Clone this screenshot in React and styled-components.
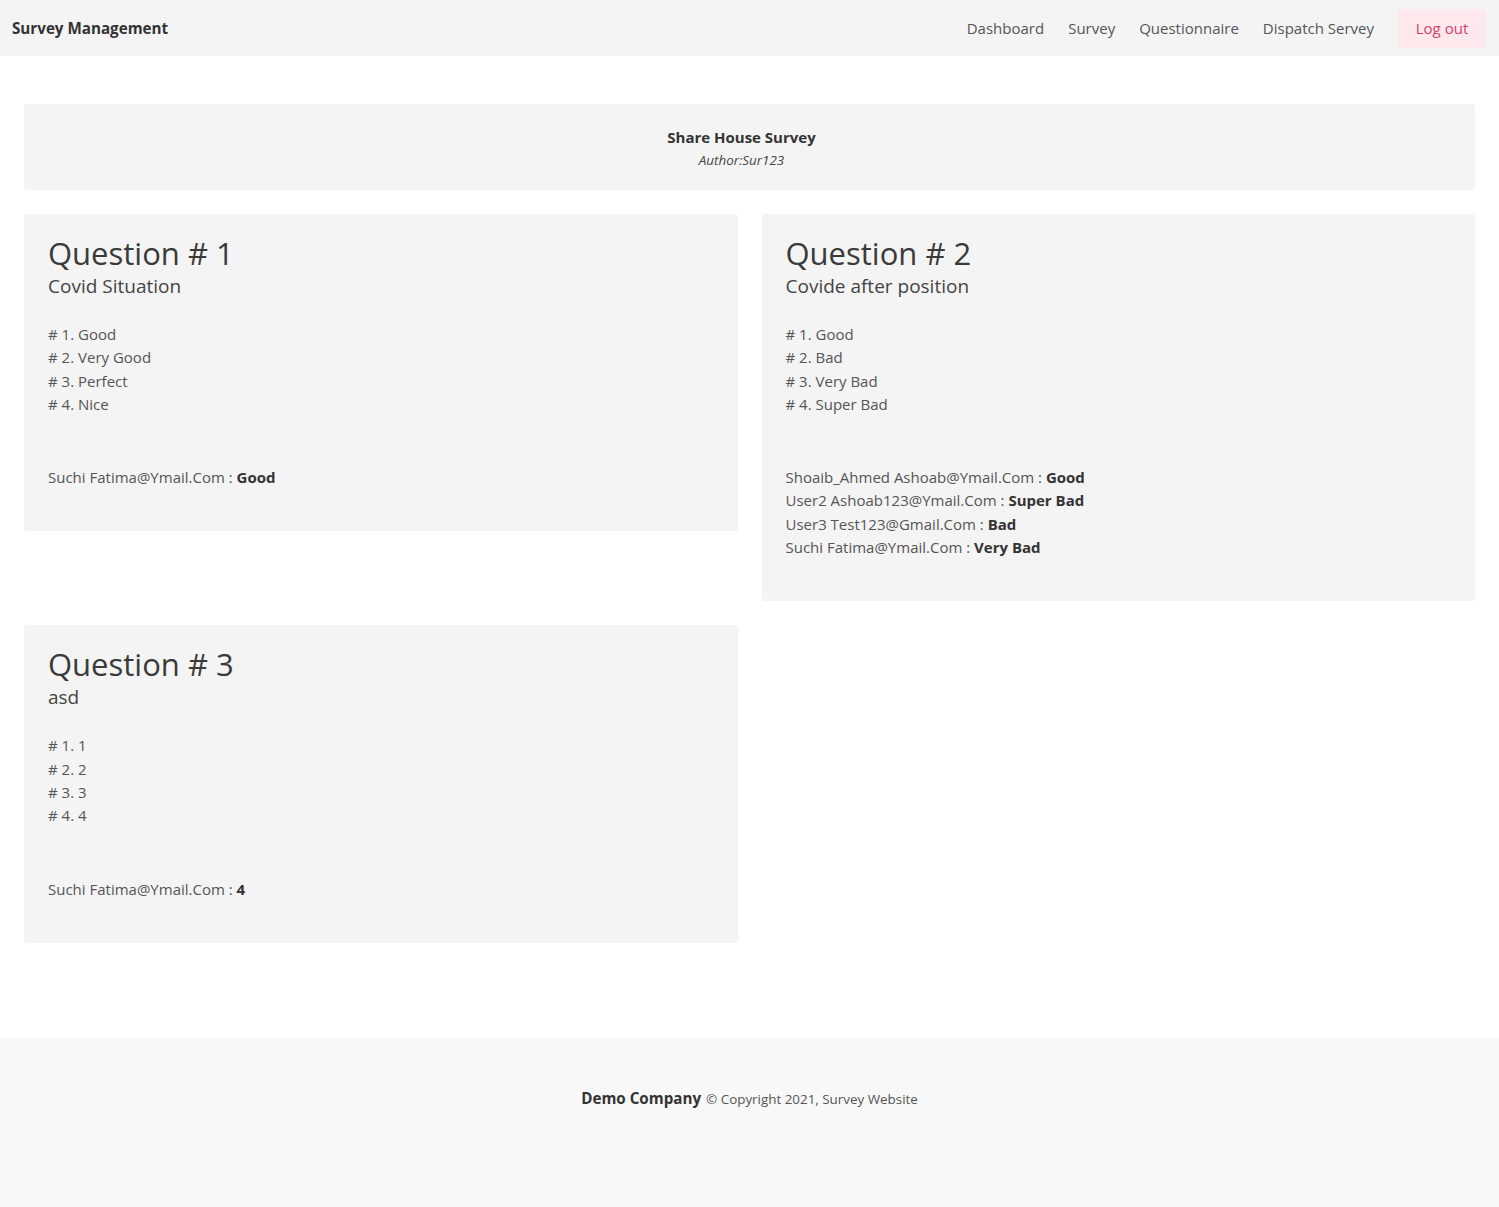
import React from "react";
import styled, { createGlobalStyle } from "styled-components";

const GlobalStyle = createGlobalStyle`
  html, body { margin: 0; padding: 0; background: #fff; }
  body {
    font-family: "Open Sans", "Noto Sans", "Liberation Sans", sans-serif;
    color: #444;
  }
  * { box-sizing: border-box; }
`;

const Page = styled.div`
  min-height: 1207px;
  display: flex;
  flex-direction: column;
`;

const Navbar = styled.nav`
  height: 56px;
  background: #f4f4f4;
  display: flex;
  align-items: center;
  justify-content: space-between;
  padding: 0 13px 0 12px;
`;

const Brand = styled.div`
  font-weight: 700;
  font-size: 15.2px;
  color: #333;
`;

const NavLinks = styled.div`
  display: flex;
  align-items: center;
`;

const NavLink = styled.a`
  font-size: 15px;
  color: #555;
  padding: 0 12px;
  text-decoration: none;
  line-height: 39px;
`;

const LogoutButton = styled.button`
  margin-left: 12px;
  height: 39px;
  width: 88px;
  padding: 0;
  border: none;
  border-radius: 3px;
  background: #fde8ec;
  color: #d43f6e;
  font-family: inherit;
  font-size: 15px;
`;

const Main = styled.main`
  flex: 1;
  padding: 48px 24px 95px;
`;

const SurveyHeader = styled.div`
  background: #f4f4f4;
  border-radius: 3px;
  height: 86px;
  display: flex;
  flex-direction: column;
  align-items: center;
  justify-content: center;
  padding: 4px 16px 0 0;
  margin-bottom: 24px;
`;

const SurveyTitle = styled.div`
  font-weight: 700;
  font-size: 15px;
  color: #333;
  line-height: 22px;
`;

const SurveyAuthor = styled.div`
  font-style: italic;
  font-size: 13.4px;
  color: #444;
  line-height: 24px;
`;

const Grid = styled.div`
  display: grid;
  grid-template-columns: 1fr 1fr;
  column-gap: 24px;
  row-gap: 24px;
  align-items: start;
`;

const Card = styled.div`
  background: #f4f4f4;
  border-radius: 3px;
  padding: 19px 24px 42px;
`;

const QuestionTitle = styled.h2`
  margin: 0;
  font-weight: 500;
  font-size: 31px;
  line-height: 40px;
  color: #3a3a3a;
`;

const QuestionText = styled.div`
  font-size: 19px;
  line-height: 26px;
  color: #444;
  margin-bottom: 24px;
`;

const OptionList = styled.div`
  margin-bottom: 50px;
`;

const Line = styled.div`
  font-size: 15px;
  line-height: 23.3px;
  color: #555;

  b { color: #333; font-weight: 700; }
`;

const Footer = styled.footer`
  height: 169px;
  background: #f8f8f8;
  display: flex;
  justify-content: center;
  padding-top: 50px;
  font-size: 13.4px;
  color: #555;
`;

const FooterBrand = styled.span`
  font-weight: 700;
  font-size: 15.2px;
  color: #333;
  margin-right: 5px;
`;

const questions = [
  {
    title: "Covid Situation",
    options: ["Good", "Very Good", "Perfect", "Nice"],
    answers: [["Suchi Fatima@Ymail.Com", "Good"]],
  },
  {
    title: "Covide after position",
    options: ["Good", "Bad", "Very Bad", "Super Bad"],
    answers: [
      ["Shoaib_Ahmed Ashoab@Ymail.Com", "Good"],
      ["User2 Ashoab123@Ymail.Com", "Super Bad"],
      ["User3 Test123@Gmail.Com", "Bad"],
      ["Suchi Fatima@Ymail.Com", "Very Bad"],
    ],
  },
  {
    title: "asd",
    options: ["1", "2", "3", "4"],
    answers: [["Suchi Fatima@Ymail.Com", "4"]],
  },
];

export default function App() {
  return (
    <Page>
      <GlobalStyle />
      <Navbar>
        <Brand>Survey Management</Brand>
        <NavLinks>
          <NavLink>Dashboard</NavLink>
          <NavLink>Survey</NavLink>
          <NavLink>Questionnaire</NavLink>
          <NavLink>Dispatch Servey</NavLink>
          <LogoutButton>Log out</LogoutButton>
        </NavLinks>
      </Navbar>
      <Main>
        <SurveyHeader>
          <SurveyTitle>Share House Survey</SurveyTitle>
          <SurveyAuthor>Author:Sur123</SurveyAuthor>
        </SurveyHeader>
        <Grid>
          {questions.map((q, i) => (
            <Card key={i}>
              <QuestionTitle>Question # {i + 1}</QuestionTitle>
              <QuestionText>{q.title}</QuestionText>
              <OptionList>
                {q.options.map((o, j) => (
                  <Line key={j}># {j + 1}. {o}</Line>
                ))}
              </OptionList>
              {q.answers.map(([user, ans], j) => (
                <Line key={j}>
                  {user} : <b>{ans}</b>
                </Line>
              ))}
            </Card>
          ))}
        </Grid>
      </Main>
      <Footer>
        <div>
          <FooterBrand>Demo Company</FooterBrand>© Copyright 2021, Survey Website
        </div>
      </Footer>
    </Page>
  );
}
